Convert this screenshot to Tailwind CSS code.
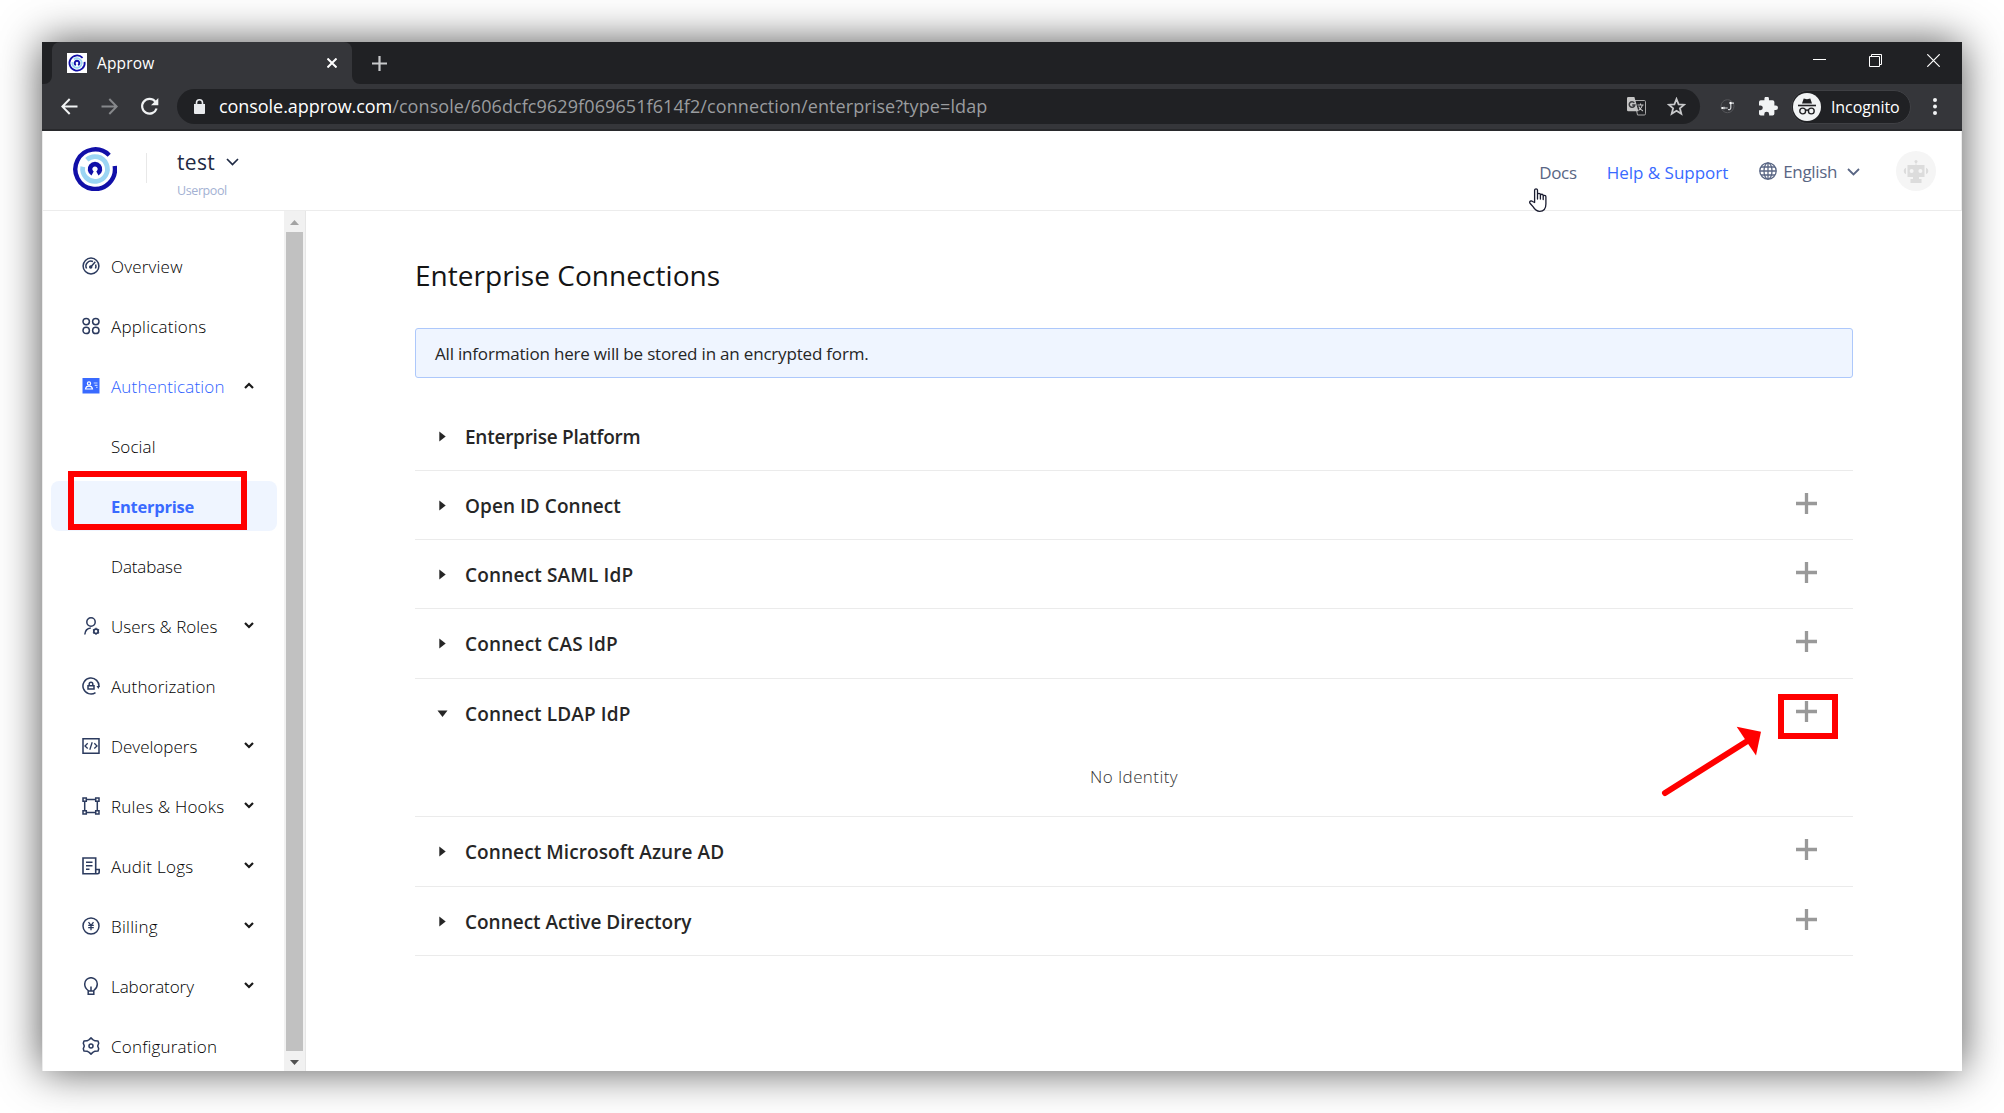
<!DOCTYPE html>
<html lang="en">
<head>
<meta charset="utf-8">
<title>Approw</title>
<script src="https://cdn.jsdelivr.net/npm/@tailwindcss/browser@4"></script>
</head>
<body class="relative h-[1113px] w-[2004px] overflow-hidden bg-white p-[42px] font-['Open_Sans',sans-serif]">
<div class="flex h-[1029px] w-[1920px] flex-col bg-white shadow-[0_0_40px_rgba(0,0,0,0.67)]">

  <!-- Tab strip -->
  <div class="flex h-[42px] shrink-0 items-stretch bg-[#202124] pl-[2px] text-white">
    <svg class="h-[42px] w-2 self-end" viewBox="0 0 8 42"><path d="M8 34a8 8 0 0 1-8 8h8z" fill="#35363a"/></svg>
    <div class="flex w-[300px] items-center rounded-t-lg bg-[#35363a] pl-[15px] pr-[15px]">
      <svg class="size-5 bg-white" viewBox="-26 -26 52 52" fill="none"><path d="M14.5-13.5A19.8 19.8 0 1 0 19.7-3" stroke="#110fa8" stroke-width="4.6"/><path d="M-8-9.5A12.4 12.4 0 1 1-12.2-2.2" stroke="#9bd5f3" stroke-width="4.8"/><path d="M-3 5.500A6 6 0 1 1 3 5.500" stroke="#110fa8" stroke-width="5"/></svg>
      <span class="ml-[10px] mt-px text-[15.500px] tracking-[0.150px]">Approw</span>
      <svg class="ml-auto size-[10px]" viewBox="0 0 10 10"><path d="M.5.5l9 9M9.500.5l-9 9" stroke="#fff" stroke-width="2"/></svg>
    </div>
    <svg class="h-[42px] w-2 self-end" viewBox="0 0 8 42"><path d="M0 34a8 8 0 0 0 8 8H0z" fill="#35363a"/></svg>
    <svg class="ml-3 size-[15px] self-center" viewBox="0 0 15 15"><path d="M7.500 0v15M0 7.500h15" stroke="#c8c9cb" stroke-width="2.200"/></svg>
    <div class="ml-auto flex items-start pr-[22px] pt-3">
      <svg class="h-[13px] w-[13px]" viewBox="0 0 13 13"><path d="M0 5.500h13" stroke="#fff"/></svg>
      <svg class="ml-[43px] size-[13px]" viewBox="0 0 13 13" fill="none" stroke="#fff"><path d="M.5 2.500h10v10H.5zM2.500 2.500v-2h10v10h-2"/></svg>
      <svg class="ml-[45px] size-[13px]" viewBox="0 0 13 13"><path d="M.3.3l12.400 12.400M12.700.3L.3 12.700" stroke="#fff" stroke-width="1.200"/></svg>
    </div>
  </div>

  <!-- Toolbar -->
  <div class="flex h-[47px] shrink-0 items-center border-b-2 border-[#28292c] bg-[#35363a] pl-[19px]">
    <svg class="size-[17px]" viewBox="0 0 17 17" fill="none" stroke="#f1f3f4" stroke-width="2"><path d="M16.500 8.500H1.500M8.700 1L1.300 8.500l7.400 7.500"/></svg>
    <svg class="ml-[23px] size-[17px]" viewBox="0 0 17 17" fill="none" stroke="#86888b" stroke-width="2"><path d="M.5 8.500h15M8.300 1l7.400 7.500-7.400 7.500"/></svg>
    <svg class="ml-[22px] size-[19px]" viewBox="0 0 19 19" fill="none" stroke="#f1f3f4" stroke-width="2.200"><path d="M15.300 4.600A7.400 7.400 0 1 0 16.600 11.500"/><path d="M18.300 1v7.300H11z" fill="#f1f3f4" stroke="none"/></svg>
    <div class="ml-[18px] flex h-[35px] w-[1523px] items-center rounded-full bg-[#202124] pl-[17px] pr-[14px] text-[18px]">
      <svg class="h-[15px] w-[11px]" viewBox="0 0 11 15"><path d="M0 5h11v9a1 1 0 0 1-1 1H1a1 1 0 0 1-1-1z" fill="#e8eaed"/><path d="M2.500 6V3.800a3 3 0 0 1 6 0V6" fill="none" stroke="#e8eaed" stroke-width="1.600"/></svg>
      <div class="ml-[14px] whitespace-nowrap"><span class="tracking-[-0.060px] text-white">console.approw.com</span><span class="tracking-[0.090px] text-[#9a9c9f]">/console/606dcfc9629f069651f614f2/connection/enterprise?type=ldap</span></div>
      <svg class="ml-auto h-[19px] w-[19px]" viewBox="0 0 19 19"><path d="M7.500 3.500h9.800a1.200 1.200 0 0 1 1.200 1.200v12.100a1.200 1.200 0 0 1-1.200 1.200H10.500z" fill="none" stroke="#a8a8a8"/><path d="M1.300 0H7.400l4 14.300H1.300A1.300 1.300 0 0 1 0 13V1.300A1.300 1.300 0 0 1 1.300 0z" fill="#c4c4c4"/><path d="M7.300 5.800A2.800 2.800 0 1 0 7.800 8H5.200" fill="none" stroke="#3c3d40" stroke-width="1.500"/><path d="M10.500 8h6M13.500 6.500V8M15.500 8c-.6 2.600-2.300 4.300-4 5.500M11.700 9.500c1 2 2.500 3.500 4.200 4.500" fill="none" stroke="#c4c4c4" stroke-width="1.100"/></svg>
      <svg class="ml-[21px] size-[19px]" viewBox="0 0 19 19"><path d="M9.500 2l2.100 5.300 5.600.4-4.300 3.600 1.400 5.500-4.800-3-4.800 3 1.400-5.500L1.800 7.700l5.600-.4z" fill="none" stroke="#c8c9cb" stroke-width="1.800"/></svg>
    </div>
    <svg class="ml-5 size-[15px]" viewBox="0 0 15 15" fill="none"><circle cx="7.500" cy="7.200" r="6.500" stroke="#55565a"/><path d="M1.500 9h6.200M4 7.800v2.400M8 10.500c2 .3 2.800-.5 2.800-2V4.200H14" stroke="#d5d7da" stroke-width="1.200"/><circle cx="2.300" cy="9" r="1" fill="#fff"/><circle cx="10.500" cy="4" r="1.200" fill="#fff"/></svg>
    <svg class="ml-6 size-[19px]" viewBox="2 1.500 21 21"><path d="M20.500 11H19V7a2 2 0 0 0-2-2h-4V3.500a2.500 2.500 0 0 0-5 0V5H4a2 2 0 0 0-2 2v3.800h1.500a2.700 2.700 0 0 1 0 5.400H2V20a2 2 0 0 0 2 2h3.800v-1.500a2.700 2.700 0 0 1 5.400 0V22H17a2 2 0 0 0 2-2v-4h1.500a2.500 2.500 0 0 0 0-5z" fill="#f1f3f4"/></svg>
    <div class="ml-[13px] flex h-[34px] w-[120px] items-center rounded-full border border-[#3f4044] bg-[#202124] pl-px">
      <svg class="size-7 shrink-0" viewBox="0 0 28 28"><circle cx="14" cy="14" r="14" fill="#f1f3f4"/><path d="M9 10.500L10.700 5.500l3.300.7 3.300-.7L19 10.500z" fill="#202124"/><path d="M5 12.500h18" stroke="#202124" stroke-width="1.600"/><g fill="none" stroke="#202124" stroke-width="1.400"><circle cx="9.700" cy="18" r="2.900"/><circle cx="18.300" cy="18" r="2.900"/><path d="M12.600 17.500q1.400-1 2.800 0"/></g></svg>
      <span class="ml-[10px] mt-px text-[16px] tracking-[-0.100px] text-white">Incognito</span>
    </div>
    <svg class="ml-[22px] h-[17px] w-1" viewBox="0 0 4 17" fill="#f1f3f4"><circle cx="2" cy="2" r="2"/><circle cx="2" cy="8.500" r="2"/><circle cx="2" cy="15" r="2"/></svg>
  </div>

  <!-- App header -->
  <div class="flex h-20 shrink-0 items-start border-b border-x border-[#ececec] bg-white">
    <svg class="ml-[30px] mt-4 size-11" viewBox="-22 -22 44 44" fill="none"><path d="M14.200-13.800A19.800 19.800 0 1 0 19.700-3" stroke="#110fa8" stroke-width="4.400"/><path d="M-8.200-9.300A12.400 12.400 0 1 1-12.200-2.200" stroke="#9bd5f3" stroke-width="4.800"/><path d="M-2.400 4.500A5 5 0 1 1 2.400 4.500" stroke="#110fa8" stroke-width="4.600"/></svg>
    <div class="ml-[29px] mt-[22px] h-[30px] w-px bg-[#e8e8e8]"></div>
    <div class="ml-[30px] mt-[15px]">
      <div class="flex items-center">
        <span class="text-[21px] leading-[32px] tracking-[0.300px] text-[#1f2a44]">test</span>
        <svg class="-mt-px ml-[11px] h-2 w-[13px]" viewBox="0 0 13 8" fill="none"><path d="M1 1l5.500 5.500L12 1" stroke="#1f2a44" stroke-width="1.700"/></svg>
      </div>
      <div class="mt-[3px] text-[12.500px] leading-5 tracking-[-0.400px] text-[#a3b1d3]">Userpool</div>
    </div>
    <div class="ml-auto mt-5 flex h-10 items-center pr-[25px] text-[17px] text-[#596684]">
      <span class="mt-[3px] tracking-[-0.300px]">Docs</span>
      <span class="ml-[30px] mt-[3px] tracking-[-0.020px] text-[#396aff]">Help &amp; Support</span>
      <svg class="ml-[31px] size-[18px]" viewBox="0 0 18 18" fill="none" stroke="#596684" stroke-width="1.300"><circle cx="9" cy="9" r="8.200"/><ellipse cx="9" cy="9" rx="4" ry="8.200"/><path d="M9 .8v16.400M.8 9h16.400M2 5h14M2 13h14"/></svg>
      <span class="ml-[6px] mt-px tracking-[-0.350px]">English</span>
      <svg class="ml-[10px] mt-[2px] h-2 w-[13px]" viewBox="0 0 13 8" fill="none"><path d="M1 1l5.500 5.500L12 1" stroke="#596684" stroke-width="1.800"/></svg>
      <svg class="ml-[36px] size-10" viewBox="0 0 40 40"><circle cx="20" cy="20" r="20" fill="#f5f5f5"/><g fill="#dcdcdc"><circle cx="20" cy="10.500" r="1.500"/><path d="M19.600 11h.8v3h-.8zM11.500 14h17v12H23v2h2.500v4h-11v-4H17v-2h-5.500zM10 16.700v6.600a3.500 3.500 0 0 1 0-6.600zM30 16.700v6.600a3.500 3.500 0 0 0 0-6.600z"/></g><circle cx="15.600" cy="20" r="2" fill="#f5f5f5"/><circle cx="24.400" cy="20" r="2" fill="#f5f5f5"/></svg>
    </div>
  </div>

  <!-- Body -->
  <div class="flex min-h-0 flex-1">
    <nav class="flex w-[242px] shrink-0 flex-col gap-[10px] overflow-hidden border-l border-[#ececec] pl-2 pr-[7px] pt-[30px] text-[17px] font-light text-black *:flex *:h-[50px] *:shrink-0 *:items-center *:rounded-lg *:pl-[31px] *:pr-[23px] [&_span]:mt-[2px] [&_svg:last-child]:-mt-[2px]">
      <div><svg class="size-[18px]" viewBox="0 0 18 18" fill="none" stroke="#2b3a5e" stroke-width="1.500"><circle cx="9" cy="9" r="7.900"/><path d="M4.600 11.500a5 5 0 0 1 6.400-7M13.600 7.500a5 5 0 0 1-.2 4M9 9.700l4.300-5"/><circle cx="8.700" cy="10" r="1" fill="#2b3a5e"/></svg><span class="ml-[11px] tracking-[0.200px]">Overview</span></div>
      <div><svg class="size-[18px]" viewBox="0 0 18 18" fill="none" stroke="#2b3a5e" stroke-width="1.500"><circle cx="4.200" cy="4.600" r="3.200"/><circle cx="13.800" cy="4.600" r="3.200"/><circle cx="4.200" cy="13.400" r="3.200"/><circle cx="13.800" cy="13.400" r="3.200"/></svg><span class="ml-[11px] tracking-[0.220px]">Applications</span></div>
      <div class="text-[#2f5fff]"><svg class="size-[18px]" viewBox="0 0 18 18"><path d="M.5 1h17v15.500H.5z" fill="#396aff"/><g fill="none" stroke="#fff" stroke-width="1.200"><circle cx="7" cy="6.500" r="1.600"/><path d="M3.500 12c.3-2 1.700-2.900 3.500-2.900s3.200.9 3.500 2.900z"/><path d="M11.700 6h3.800M12.700 8.300h2.800M14.200 10.300h1.300" stroke="#c7d6ff"/></g></svg><span class="ml-[11px] tracking-[0.150px]">Authentication</span><svg class="ml-auto h-[7px] w-[10px]" viewBox="0 0 10 7" fill="none"><path d="M1 6l4-4 4 4" stroke="#1a1a1a" stroke-width="2.200"/></svg></div>
      <div><span class="ml-[29px] tracking-[0.100px]">Social</span></div>
      <div class="bg-[#eff5ff] font-bold text-[#396aff]"><span class="ml-[29px] text-[16.500px] tracking-[-0.250px]">Enterprise</span></div>
      <div><span class="ml-[29px] tracking-[-0.120px]">Database</span></div>
      <div><svg class="size-[18px]" viewBox="0 0 18 18" fill="none" stroke="#2b3a5e" stroke-width="1.500"><circle cx="9" cy="5" r="4.200"/><path d="M2.800 17.500c.3-3.700 2.500-6 6-6.400"/><circle cx="14" cy="14.300" r="2.200" stroke-width="1.700"/><path d="M14 10.800v1M14 16.800v1M11 12.500l.8.500M16.200 15.600l.9.500M11 16.100l.8-.5M16.200 13l.9-.5" stroke-width="1.300"/></svg><span class="ml-[11px] tracking-[0.020px]">Users &amp; Roles</span><svg class="ml-auto h-[7px] w-[10px]" viewBox="0 0 10 7" fill="none"><path d="M1 1l4 4 4-4" stroke="#1a1a1a" stroke-width="2.200"/></svg></div>
      <div><svg class="size-[18px]" viewBox="0 0 18 18" fill="none" stroke="#2b3a5e" stroke-width="1.500"><path d="M13.500 15.600A8 8 0 1 1 16.900 10"/><path d="M14.500 9h3.400l-1.500 3z" fill="#2b3a5e" stroke="none"/><path d="M6 8.700h6V12H6zM7.200 8.500V7a1.800 1.800 0 0 1 3.600 0v1.500"/></svg><span class="ml-[11px] tracking-[0.150px]">Authorization</span></div>
      <div><svg class="size-[18px]" viewBox="0 0 18 18" fill="none" stroke="#2b3a5e" stroke-width="1.500"><path d="M1 1.800h16v14.400H1z"/><path d="M5.700 6.300L3 9l2.700 2.500M12.300 6.300L15 9l-2.700 2.500M10.200 5.200L7.800 12.800" stroke-width="1.300"/></svg><span class="ml-[11px]">Developers</span><svg class="ml-auto h-[7px] w-[10px]" viewBox="0 0 10 7" fill="none"><path d="M1 1l4 4 4-4" stroke="#1a1a1a" stroke-width="2.200"/></svg></div>
      <div><svg class="size-[18px]" viewBox="0 0 18 18" fill="none" stroke="#2b3a5e" stroke-width="1.500"><path d="M1 1h3.300v3.300H1zM13.700 1H17v3.300h-3.300zM1 13.700h3.300V17H1zM13.700 13.700H17V17h-3.300zM4.300 2.600h9.400M4.300 15.400h9.400M2.700 4.300v9.400M15.300 4.300v9.400"/></svg><span class="ml-[11px] tracking-[0.220px]">Rules &amp; Hooks</span><svg class="ml-auto h-[7px] w-[10px]" viewBox="0 0 10 7" fill="none"><path d="M1 1l4 4 4-4" stroke="#1a1a1a" stroke-width="2.200"/></svg></div>
      <div><svg class="size-[18px]" viewBox="0 0 18 18" fill="none" stroke="#2b3a5e" stroke-width="1.600"><path d="M13.700 12.500V1H1v15.800h14.500c1 0 1.700-.7 1.700-1.700v-2.600h-3.500v4.300M4 5.200h6.500M4 8.700h6.500M4 12.200h3.500"/></svg><span class="ml-[11px] tracking-[0.280px]">Audit Logs</span><svg class="ml-auto h-[7px] w-[10px]" viewBox="0 0 10 7" fill="none"><path d="M1 1l4 4 4-4" stroke="#1a1a1a" stroke-width="2.200"/></svg></div>
      <div><svg class="size-[18px]" viewBox="0 0 18 18" fill="none" stroke="#2b3a5e" stroke-width="1.500"><circle cx="9" cy="9" r="8"/><path d="M6.500 5.200L9 8.400l2.500-3.200M9 8v5.200M6.200 8.400h5.600M6.200 10.700h5.600" stroke-width="1.300"/></svg><span class="ml-[11px] tracking-[0.280px]">Billing</span><svg class="ml-auto h-[7px] w-[10px]" viewBox="0 0 10 7" fill="none"><path d="M1 1l4 4 4-4" stroke="#1a1a1a" stroke-width="2.200"/></svg></div>
      <div><svg class="size-[18px]" viewBox="0 0 18 18" fill="none" stroke="#2b3a5e" stroke-width="1.500"><path d="M6.200 13.500C3.800 11.700 2.700 9.600 2.700 7a6.300 6.300 0 0 1 12.600 0c0 2.600-1.100 4.700-3.500 6.500v3.700H6.200zM6.200 14h5.600M9 9.500V14"/></svg><span class="ml-[11px] tracking-[-0.060px]">Laboratory</span><svg class="ml-auto h-[7px] w-[10px]" viewBox="0 0 10 7" fill="none"><path d="M1 1l4 4 4-4" stroke="#1a1a1a" stroke-width="2.200"/></svg></div>
      <div><svg class="size-[18px]" viewBox="0 0 18 18" fill="none" stroke="#2b3a5e" stroke-width="1.500" stroke-linejoin="round"><path d="M7.200 2.600L9 .9l1.800 1.700 2.200 1.200 3 .1.700 2.400-1 2.700 1 2.700-.7 2.400-3 .1-2.200 1.200L9 17.100l-1.800-1.700L5 14.200l-3-.1-.7-2.400 1-2.700-1-2.700L2 3.900l3-.1z"/><circle cx="9" cy="9" r="2"/></svg><span class="ml-[11px] tracking-[0.200px]">Configuration</span></div>
    </nav>

    <!-- Sidebar scrollbar -->
    <div class="flex w-[22px] shrink-0 flex-col items-center border-r border-[#e6e6e6] bg-[#f1f1f1]">
      <div class="flex h-[21px] items-center pt-[2px]"><svg class="h-[5px] w-[9px]" viewBox="0 0 9 5"><path d="M0 5l4.500-5L9 5z" fill="#a3a3a3"/></svg></div>
      <div class="w-[17px] flex-1 bg-[#c1c1c1]"></div>
      <div class="flex h-5 items-center pt-[2px]"><svg class="h-[5px] w-[9px]" viewBox="0 0 9 5"><path d="M0 0l4.500 5L9 0z" fill="#505050"/></svg></div>
    </div>

    <!-- Content -->
    <main class="flex-1 pl-[109px] pr-[109px] text-[#262626]">
      <h1 class="mt-[44px] text-[28px] leading-10 tracking-[0.040px] text-[#141414]">Enterprise Connections</h1>
      <div class="mt-[33px] flex h-[50px] items-center rounded-[3px] border border-[#adc8fb] bg-[#eff5ff] pl-[19px] pt-px text-[17px] tracking-[-0.190px]">All information here will be stored in an encrypted form.</div>
      <div class="mt-6 text-[19px] font-semibold *:border-b *:border-[#ebebeb] [&_span]:mt-[2px]">
        <div class="flex h-[69px] items-center pl-6"><svg class="mr-[18px] h-[11px] w-2" viewBox="0 0 8 11"><path d="M.3.500l6.400 5L.3 10.500z" fill="#262626"/></svg><span class="pt-px tracking-[-0.250px]">Enterprise Platform</span></div>
        <div class="flex h-[69px] items-center pl-6 pr-[36px]"><svg class="mr-[18px] h-[11px] w-2" viewBox="0 0 8 11"><path d="M.3.500l6.400 5L.3 10.500z" fill="#262626"/></svg><span class="tracking-[0.050px]">Open ID Connect</span><svg class="mb-[3px] ml-auto size-[21px]" viewBox="0 0 21 21"><path d="M10.500 0v21M0 10.500h21" stroke="#999" stroke-width="3.300"/></svg></div>
        <div class="flex h-[69px] items-center pl-6 pr-[36px]"><svg class="mr-[18px] h-[11px] w-2" viewBox="0 0 8 11"><path d="M.3.500l6.400 5L.3 10.500z" fill="#262626"/></svg><span class="tracking-[0.170px]">Connect SAML IdP</span><svg class="mb-[3px] ml-auto size-[21px]" viewBox="0 0 21 21"><path d="M10.500 0v21M0 10.500h21" stroke="#999" stroke-width="3.300"/></svg></div>
        <div class="flex h-[70px] items-center pl-6 pr-[36px]"><svg class="mr-[18px] h-[11px] w-2" viewBox="0 0 8 11"><path d="M.3.500l6.400 5L.3 10.500z" fill="#262626"/></svg><span class="tracking-[0.200px]">Connect CAS IdP</span><svg class="mb-[4px] ml-auto size-[21px]" viewBox="0 0 21 21"><path d="M10.500 0v21M0 10.500h21" stroke="#999" stroke-width="3.300"/></svg></div>
        <div class="h-[138px]">
          <div class="flex h-[68px] items-center pl-[22px] pr-[36px]"><svg class="mr-[17px] h-[7px] w-[11px]" viewBox="0 0 11 7"><path d="M.5.500h10L5.500 7z" fill="#262626"/></svg><span class="tracking-[0.140px]">Connect LDAP IdP</span><svg class="mb-[3px] ml-auto size-[21px]" viewBox="0 0 21 21"><path d="M10.500 0v21M0 10.500h21" stroke="#999" stroke-width="3.300"/></svg></div>
          <div class="mt-4 text-center text-[17px] font-light leading-7 tracking-[0.400px] text-[#333]">No Identity</div>
        </div>
        <div class="flex h-[70px] items-center pl-6 pr-[36px]"><svg class="mr-[18px] h-[11px] w-2" viewBox="0 0 8 11"><path d="M.3.500l6.400 5L.3 10.500z" fill="#262626"/></svg><span class="tracking-[0.080px]">Connect Microsoft Azure AD</span><svg class="mb-[4px] ml-auto size-[21px]" viewBox="0 0 21 21"><path d="M10.500 0v21M0 10.500h21" stroke="#999" stroke-width="3.300"/></svg></div>
        <div class="flex h-[69px] items-center pl-6 pr-[36px]"><svg class="mr-[18px] h-[11px] w-2" viewBox="0 0 8 11"><path d="M.3.500l6.400 5L.3 10.500z" fill="#262626"/></svg><span class="tracking-[-0.010px]">Connect Active Directory</span><svg class="mb-[3px] ml-auto size-[21px]" viewBox="0 0 21 21"><path d="M10.500 0v21M0 10.500h21" stroke="#999" stroke-width="3.300"/></svg></div>
      </div>
    </main>
  </div>
</div>

<!-- Annotations and pointer -->
<div class="absolute left-[68px] top-[471px] h-[59px] w-[179px] border-[6px] border-[#f00]"></div>
<div class="absolute left-[1778px] top-[694px] h-[45px] w-[60px] border-[6px] border-[#f00]"></div>
<svg class="absolute left-[1660px] top-[724px] h-[75px] w-[105px]" viewBox="1660 724 105 75"><path d="M1665 793L1749 740" stroke="#f00" stroke-width="6" stroke-linecap="round"/><path d="M1736.700 726.700L1761 731.700L1756 755.500L1748.500 744.500L1744.500 738.500z" fill="#f00"/></svg>
<svg class="absolute left-[1529px] top-[188px] h-[25px] w-[19px]" viewBox="0 0 19 25"><path d="M5.600 14.500V2.300c0-2 2.900-2 2.900 0V11 6.800c0-1.800 2.900-1.800 2.900 0V11 7.500c0-1.700 2.800-1.700 2.800 0v4-3c0-1.500 2.700-1.500 2.700.3v7.200c0 4.500-2.300 7.300-6.200 7.300-3.700 0-5-1.800-6.500-4.400L1 15.200c-1-1.700 1.100-3.200 2.500-1.700z" fill="#fff" stroke="#1a1c30" stroke-width="1.300" stroke-linejoin="round"/></svg>
</body>
</html>
